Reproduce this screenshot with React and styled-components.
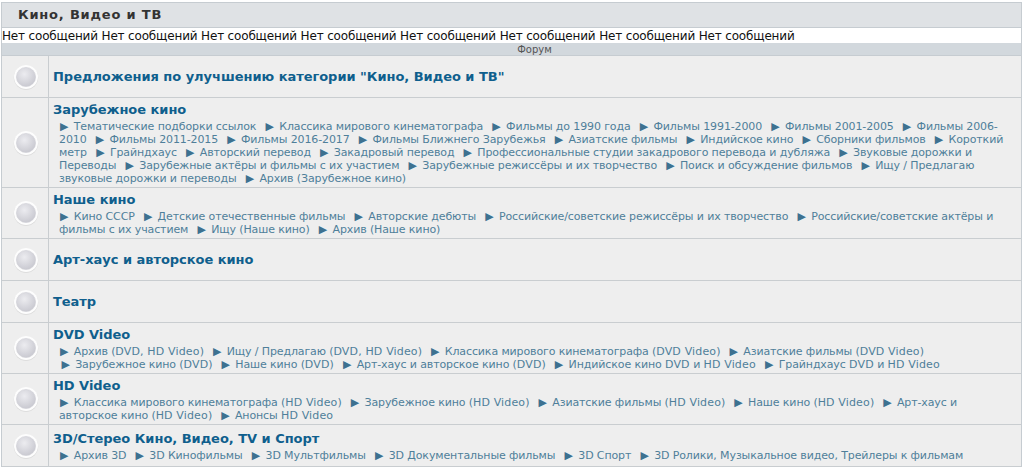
import React from 'react';
import styled, { createGlobalStyle } from 'styled-components';

const Global = createGlobalStyle`
  html, body { margin: 0; padding: 0; background: #fff; }
  body { font-family: "DejaVu Sans", Verdana, sans-serif; }
`;

const Page = styled.div`
  width: 1023px;
  height: 469px;
  overflow: hidden;
  padding: 2px 1px 0;
  box-sizing: border-box;
`;
const Board = styled.div`
  border: 1px solid #c6ccd1;
  border-bottom: none;
  display: flex;
  flex-direction: column;
`;
const Title = styled.div`
  height: 24px;
  background: #dfe2e5;
  border-bottom: 1px solid #c6ccd1;
  padding-left: 16px;
  font-size: 13px;
  font-weight: 700;
  letter-spacing: 0.8px;
  line-height: 24px;
  color: #333;
`;
const Ticker = styled.div`
  height: 15px;
  line-height: 17px;
  background: #fff;
  font-size: 12px;
  letter-spacing: -0.165px;
  color: #111;
  white-space: nowrap;
  overflow: hidden;
`;
const ForumHead = styled.div`
  height: 12px;
  line-height: 13px;
  background: #d2d8dd;
  border-bottom: 1px solid #c6ccd1;
  text-align: center;
  padding-left: 46px;
  font-size: 10px;
  color: #555;
  overflow: hidden;
`;
const Row = styled.div`
  display: grid;
  grid-template-columns: 47px 1fr;
  height: ${p => p.$h}px;
  box-sizing: border-box;
  background: #eeeeee;
  border-bottom: 1px solid #c9cdd0;
`;
const IconCell = styled.div`
  border-right: 1px solid #c9cdd0;
  display: flex;
  align-items: center;
  justify-content: center;
  padding-left: 1px;
`;
const Body = styled.div`
  padding: ${p => p.$pt}px 12px 0 4px;
  min-width: 0;
`;
const Name = styled.div`
  font-size: 13px;
  font-weight: 700;
  line-height: 16px;
  letter-spacing: -0.03px;
  color: #0f5f8d;
`;
const Subs = styled.div`
  font-size: 11px;
  line-height: 13px;
  color: #4f7f9a;
  padding-left: 6px;
  text-indent: -1.4px;
  margin-top: 2px;
  letter-spacing: -0.12px;
`;
const Arrow = styled.span`
  color: #3d7190;
  font-size: 11px;
  line-height: 0;
  margin: 0 2px 0 2.4px;
`;
const Latin = styled.span`
  letter-spacing: 0.15px;
`;

const Lamp = () => (
  <svg width="26" height="26" viewBox="0 0 26 26">
    <defs>
      <radialGradient id="lamp" cx="0.42" cy="0.35" r="0.75">
        <stop offset="0" stopColor="#ececf0" />
        <stop offset="1" stopColor="#c4c4cc" />
      </radialGradient>
    </defs>
    <circle cx="13" cy="13.6" r="12.2" fill="#d8d8d8" />
    <circle cx="13" cy="13" r="12" fill="#fdfdfd" />
    <circle cx="13" cy="13" r="9.6" fill="url(#lamp)" stroke="#cfcfd5" strokeWidth="0.6" />
  </svg>
);

const withLatin = s =>
  s.split(/([A-Za-z][A-Za-z, ]*[A-Za-z])/).map((part, i) =>
    i % 2 ? <Latin key={i}>{part}</Latin> : part
  );

const rows = [
  { h: 42, pt: 13, name: 'Предложения по улучшению категории "Кино, Видео и ТВ"', subs: [] },
  { h: 90, pt: 4, name: 'Зарубежное кино', subs: ['Тематические подборки ссылок', 'Классика мирового кинематографа', 'Фильмы до 1990 года', 'Фильмы 1991-2000', 'Фильмы 2001-2005', 'Фильмы 2006-2010', 'Фильмы 2011-2015', 'Фильмы 2016-2017', 'Фильмы Ближнего Зарубежья', 'Азиатские фильмы', 'Индийское кино', 'Сборники фильмов', 'Короткий метр', 'Грайндхаус', 'Авторский перевод', 'Закадровый перевод', 'Профессиональные студии закадрового перевода и дубляжа', 'Звуковые дорожки и Переводы', 'Зарубежные актёры и фильмы с их участием', 'Зарубежные режиссёры и их творчество', 'Поиск и обсуждение фильмов', 'Ищу / Предлагаю звуковые дорожки и переводы', 'Архив (Зарубежное кино)'] },
  { h: 51, pt: 4, name: 'Наше кино', subs: ['Кино СССР', 'Детские отечественные фильмы', 'Авторские дебюты', 'Российские/советские режиссёры и их творчество', 'Российские/советские актёры и фильмы с их участием', 'Ищу (Наше кино)', 'Архив (Наше кино)'] },
  { h: 42, pt: 13, name: 'Арт-хаус и авторское кино', subs: [] },
  { h: 42, pt: 13, name: 'Театр', subs: [] },
  { h: 51, pt: 4, name: 'DVD Video', subs: ['Архив (DVD, HD Video)', 'Ищу / Предлагаю (DVD, HD Video)', 'Классика мирового кинематографа (DVD Video)', 'Азиатские фильмы (DVD Video)', 'Зарубежное кино (DVD)', 'Наше кино (DVD)', 'Арт-хаус и авторское кино (DVD)', 'Индийское кино DVD и HD Video', 'Грайндхаус DVD и HD Video'] },
  { h: 51, pt: 4, name: 'HD Video', subs: ['Классика мирового кинематографа (HD Video)', 'Зарубежное кино (HD Video)', 'Азиатские фильмы (HD Video)', 'Наше кино (HD Video)', 'Арт-хаус и авторское кино (HD Video)', 'Анонсы HD Video'] },
  { h: 42, pt: 6, name: '3D/Стерео Кино, Видео, TV и Спорт', subs: ['Архив 3D', '3D Кинофильмы', '3D Мультфильмы', '3D Документальные фильмы', '3D Спорт', '3D Ролики, Музыкальное видео, Трейлеры к фильмам'] },
];

export default function App() {
  return (
    <Page>
      <Global />
      <Board>
        <Title>Кино, Видео и ТВ</Title>
        <Ticker>{Array(8).fill('Нет сообщений').join(' ')}</Ticker>
        <ForumHead>Форум</ForumHead>
        {rows.map(r => (
          <Row key={r.name} $h={r.h}>
            <IconCell><Lamp /></IconCell>
            <Body $pt={r.pt}>
              <Name>{r.name}</Name>
              {r.subs.length > 0 && (
                <Subs>
                  {r.subs.map(s => (
                    <React.Fragment key={s}>
                      <Arrow>▶</Arrow>{'\u00a0'}{withLatin(s)}{'\u00a0 '}
                    </React.Fragment>
                  ))}
                </Subs>
              )}
            </Body>
          </Row>
        ))}
      </Board>
    </Page>
  );
}
